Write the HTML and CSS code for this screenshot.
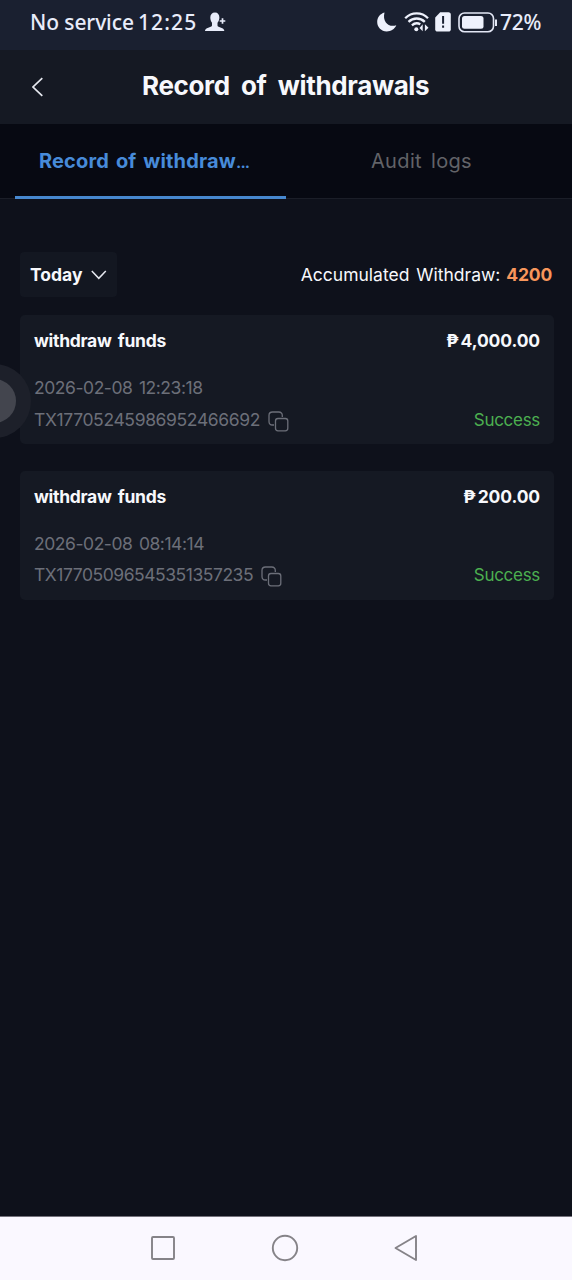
FILE: index.html
```html
<!DOCTYPE html>
<html lang="en">
<head>
<meta charset="utf-8">
<meta name="viewport" content="width=device-width, initial-scale=1">
<title>Record of withdrawals</title>
<link rel="stylesheet" href="styles.css">
</head>
<body>
<div class="screen">
  <div class="statusbar">
    <span class="carrier">No service</span>
    <span class="clock">12:25</span>
    <svg class="user-icon" width="21" height="20" viewBox="0 0 21 20" fill="#e8ecfa"><path d="M10 0.5c-3 0-4.700 2-4.700 5 0 2 .7 4 1.700 5.300v2.400c0 .8-.5 1.200-1.300 1.500L2 16.200C.7 16.800 0 17.700 0 19h19.300c0-1.300-.7-2.200-2-2.800l-3.700-1.500c-.8-.3-1.100-.7-1.100-1.500v-2.400c1-1.300 1.900-3.300 1.900-5.300 0-3-1.600-5-4.400-5z"/><path d="M17.500 6.200v5.600M14.700 9h5.600" stroke="#e8ecfa" stroke-width="1.700"/></svg>
    <div class="indicators">
      <svg class="moon" width="20" height="20" viewBox="0 0 20 20" fill="#eef1fc"><path d="M7.500.4C3 1.700.2 5.300.2 9.900c0 5.200 4.200 9.500 9.500 9.500 4.300 0 7.900-2.300 9.600-6.200C12.200 15.800 5 10.200 7.500.4z"/></svg>
      <svg class="wifi" width="25" height="20" viewBox="0 0 25 20" fill="none" stroke="#eef1fc"><path d="M1.200 6.200C7.600-.2 17.800-.2 24 6.200M4.500 9.800c4.700-4.400 11.700-4.400 16.300 0M7.900 13.300c2.700-2.400 5.700-2.600 8.400-1" stroke-width="2.300"/><circle cx="12.300" cy="17.300" r="2" fill="#eef1fc" stroke="none"/><path d="M18.700 12.300v7l-3.200-3.300zM20.900 12.300v7l3.600-3.600z" fill="#eef1fc" stroke="none"/></svg>
      <svg class="sim" width="16" height="20" viewBox="0 0 16 20"><path d="M5.200.3h8.300c1.400 0 2.300.9 2.300 2.300v14.600c0 1.400-.9 2.400-2.300 2.400h-11C1.100 19.600.2 18.600.2 17.200V5.400z" fill="#eef1fc"/><path d="M8.100 4v7.700M8.100 13.500v2.300" stroke="#1a2032" stroke-width="2"/></svg>
      <svg class="battery" width="41" height="21" viewBox="0 0 41 21" fill="none"><rect x="1" y="1" width="34.500" height="18.800" rx="5.500" stroke="#e3e7f5" stroke-width="1.600"/><rect x="4" y="4" width="21.500" height="12.800" rx="2.500" fill="#eef1fc"/><path d="M38 7.500v6.500" stroke="#e3e7f5" stroke-width="2"/></svg>
      <span class="percent">72%</span>
    </div>
  </div>

  <header class="header">
    <svg class="back" width="12" height="20" viewBox="0 0 12 20" fill="none" stroke="#e6e8ef" stroke-width="1.700"><path d="M10.300 1.200 1 10l9.300 8.800"/></svg>
    <h1 class="title">Record of withdrawals</h1>
  </header>

  <nav class="tabs">
    <div class="tab tab-active"><span class="tab-label">Record of withdraw<span class="ellipsis">...</span></span></div>
    <div class="tab"><span class="tab-label-idle">Audit logs</span></div>
  </nav>

  <main class="content">
    <div class="filter">
      <div class="dropdown"><span class="day">Today</span>
        <svg width="16" height="10" viewBox="0 0 16 10" fill="none" stroke="#e6e8ef" stroke-width="1.500"><path d="M.8 1 7.800 8.300 14.800 1"/></svg>
      </div>
      <div class="total"><span class="total-label">Accumulated Withdraw:</span><span class="total-value">4200</span></div>
    </div>

    <article class="card">
      <div class="row row-head"><span class="kind">withdraw funds</span><span class="amount"><span class="peso">₱</span><span class="sum">4,000.00</span></span></div>
      <div class="row row-date"><span class="date">2026-02-08 12:23:18</span></div>
      <div class="row row-tx"><span class="tx">TX17705245986952466692</span>
        <svg class="copy" width="21" height="21" viewBox="0 0 21 21" fill="none" stroke="#6c6f79" stroke-width="1.300"><path d="M6 14H4.500C2.300 14 1 12.700 1 10.500v-6C1 2.300 2.300 1 4.500 1h6.300C13 1 14.300 2.300 14.300 4.500V6"/><rect x="7.500" y="7.500" width="12.300" height="12.300" rx="2.500"/></svg>
        <span class="state">Success</span></div>
    </article>

    <article class="card card-second">
      <div class="row row-head"><span class="kind">withdraw funds</span><span class="amount"><span class="peso">₱</span><span class="sum">200.00</span></span></div>
      <div class="row row-date"><span class="date">2026-02-08 08:14:14</span></div>
      <div class="row row-tx"><span class="tx">TX17705096545351357235</span>
        <svg class="copy" width="21" height="21" viewBox="0 0 21 21" fill="none" stroke="#6c6f79" stroke-width="1.300"><path d="M6 14H4.500C2.300 14 1 12.700 1 10.500v-6C1 2.300 2.300 1 4.500 1h6.300C13 1 14.300 2.300 14.300 4.500V6"/><rect x="7.500" y="7.500" width="12.300" height="12.300" rx="2.500"/></svg>
        <span class="state">Success</span></div>
    </article>
    <div class="assist"><div class="assist-core"></div></div>
  </main>

  <footer class="navbar">
    <svg width="26" height="26" viewBox="0 0 26 26" fill="none" stroke="#858388" stroke-width="1.900"><rect x="2" y="2" width="22" height="22" rx="1"/></svg>
    <svg width="28" height="28" viewBox="0 0 28 28" fill="none" stroke="#858388" stroke-width="1.900"><circle cx="14" cy="14" r="12.200"/></svg>
    <svg width="26" height="28" viewBox="0 0 26 28" fill="none" stroke="#858388" stroke-width="1.900" stroke-linejoin="round"><path d="M23 2v24L2.500 14z"/></svg>
  </footer>
</div>
</body>
</html>
```
FILE: styles.css
```css
* { box-sizing: border-box; }
body { margin: 0; background: #0e111b; font-family: Inter, "Noto Sans", sans-serif; color: #f7f8fc; }
svg { display: block; flex: none; }
span { white-space: nowrap; }
.screen { width: 572px; height: 1280px; display: flex; flex-direction: column; overflow: hidden; }

.statusbar { height: 50px; padding: 0 30px 6px; display: flex; align-items: center; background: #1a2030; color: #e8ecfa; font: 500 21px/28px "Noto Sans", sans-serif; }
.carrier { width: 108px; letter-spacing: -0.1px; }
.clock { width: 67px; letter-spacing: 1.1px; }
.indicators { margin-left: auto; display: flex; align-items: center; }
.wifi { margin-left: 7px; }
.sim { margin-left: 6px; }
.battery { margin-left: 7px; }
.percent { width: 42px; margin-left: 1px; letter-spacing: -0.3px; }

.header { height: 74px; padding: 0 0 2px 32px; display: flex; align-items: center; background: #151923; }
.back { margin: 2px 98px 0 0; }
.title { margin: 0; font-size: 26px; font-weight: 700; line-height: 34px; letter-spacing: -0.36px; word-spacing: 5.5px; white-space: nowrap; }

.tabs { height: 75px; flex: none; display: flex; padding: 0 15px; background: #070912; border-bottom: 1px solid #1b1e28; }
.tab { width: 271px; display: flex; justify-content: center; align-items: center; padding-bottom: 1px; font-size: 20px; line-height: 28px; letter-spacing: 0.35px; word-spacing: 3px; color: #626368; }
.tab-active { justify-content: flex-start; border-bottom: 3px solid #4788cf; margin-bottom: -1px; padding: 2px 0 0 24px; letter-spacing: 0.15px; word-spacing: 2px; color: #478bd9; font-weight: 700; }
.ellipsis { font-weight: 400; letter-spacing: -1.4px; }

.content { flex: 1; position: relative; padding: 54px 18px 0 20px; background: #0e111b; }
.filter { height: 43px; display: flex; justify-content: space-between; align-items: center; font-size: 17.500px; }
.dropdown { height: 45px; width: 97px; padding: 0 10px; display: flex; align-items: center; justify-content: space-between; background: #131721; border-radius: 4px; font-weight: 700; }
.total { display: flex; gap: 6px; padding-right: 2px; }
.total-label { word-spacing: 2px; }
.total-value { color: #f8965b; font-weight: 700; letter-spacing: -0.2px; }

.card { height: 129px; margin-top: 19px; padding: 14px 14px 0; background: #151923; border-radius: 5px; font-size: 17.500px; line-height: 24px; }
.card-second { margin-top: 27px; }
.card-second .row-tx { margin-top: 7px; }
.card-second .tx { letter-spacing: -0.46px; }
.row { display: flex; align-items: center; height: 24px; }
.row-date { margin-top: 23px; }
.row-tx { margin-top: 8px; }
.kind, .amount { font-weight: 650; }
.kind { letter-spacing: -0.3px; word-spacing: 2.5px; }
.amount { margin-left: auto; display: flex; gap: 2px; letter-spacing: -0.12px; }
.date, .tx { color: #6c6f79; }
.date { letter-spacing: -0.45px; word-spacing: 2px; }
.tx { letter-spacing: -0.36px; }
.card-second .tx { letter-spacing: -0.46px; }
.copy { margin: 2px 0 0 8px; }
.state { margin-left: auto; font-size: 17px; letter-spacing: -0.3px; color: #4caf50; }
.assist { position: absolute; left: -43px; top: 165px; width: 74px; height: 74px; border-radius: 50%; background: #1d202a; display: flex; align-items: center; justify-content: center; }
.assist-core { width: 44px; height: 44px; border-radius: 50%; background: #43454e; }

.navbar { height: 64px; flex: none; padding: 0 153px 2px 150px; display: flex; align-items: center; justify-content: space-between; background: #faf8ff; border-top: 1px solid #74727c; }
```
